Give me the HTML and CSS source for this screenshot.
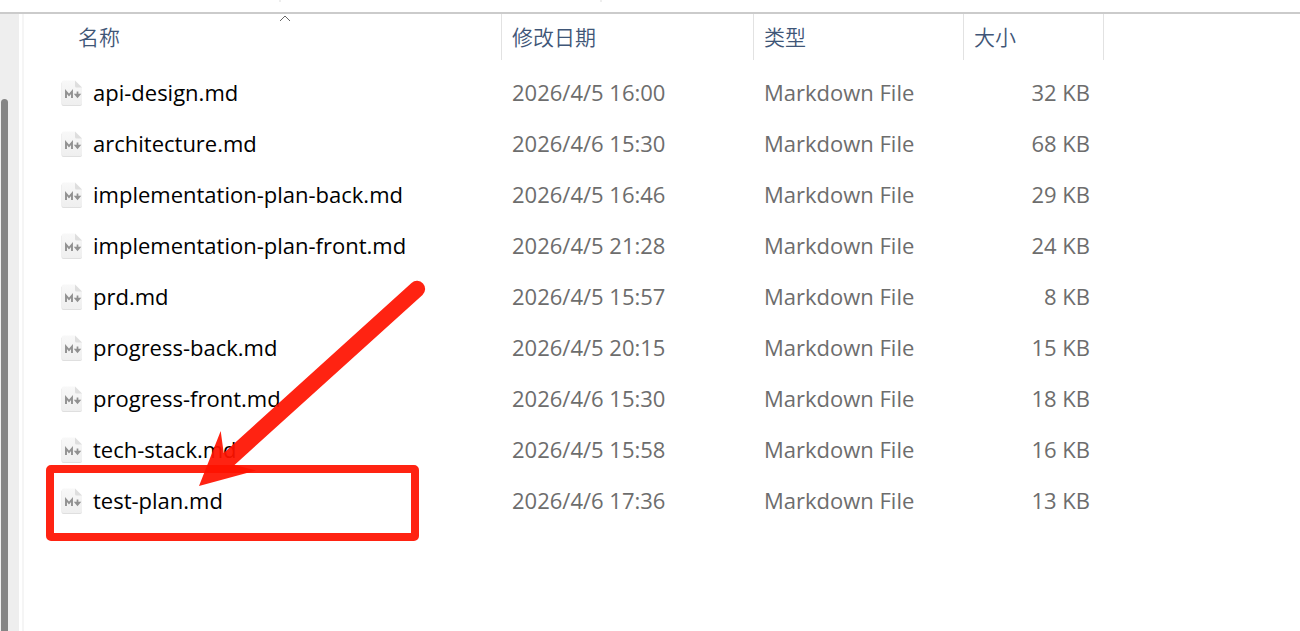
FILE: index.html
```
<!DOCTYPE html>
<html lang="zh-CN">
<head>
<meta charset="utf-8">
<title>docs</title>
<link rel="stylesheet" href="styles.css">
</head>
<body>
<svg class="defs" aria-hidden="true">
  <defs>
    <linearGradient id="paper" x1="0" y1="0" x2="0" y2="1">
      <stop offset="0" stop-color="#f8f8f8"/><stop offset="1" stop-color="#efefef"/>
    </linearGradient>
    <symbol id="md" viewBox="0 0 22 27">
      <path d="M2.500 1.500H14l7 7V24a2 2 0 0 1-2 2H2.500a2 2 0 0 1-2-2V3a2 2 0 0 1 2-1.500z" fill="#dfdfdf"/>
      <path d="M2.500.5H14l7 7V23.500a1.500 1.500 0 0 1-1.500 1.500h-17A1.500 1.500 0 0 1 1 23.500V2A1.500 1.500 0 0 1 2.500.5z" fill="url(#paper)"/>
      <path d="M14 .5l7 7h-5.500A1.500 1.500 0 0 1 14 6z" fill="#dedede"/>
      <path d="M5 18v-6.500l3 3.500 3-3.500V18" fill="none" stroke="#919191" stroke-width="1.900"/>
      <path d="M16.500 11.500v3M14.500 14.500h4l-2 2.500z" fill="#919191" stroke="#919191" stroke-width="1.700"/>
    </symbol>
  </defs>
</svg>
<div class="toolbar-edge"><span class="tick"></span><span class="tick"></span></div>
<div class="explorer">
  <aside class="nav-pane"><div class="scroll-thumb"></div></aside>
  <main class="file-pane">
    <table class="files">
      <colgroup><col class="col-name"><col class="col-date"><col class="col-type"><col class="col-size"></colgroup>
      <thead>
        <tr>
          <th class="name">名称<svg class="sort" viewBox="0 0 12 7" aria-hidden="true"><path d="M1 6l5-5 5 5"/></svg></th>
          <th>修改日期</th><th>类型</th><th>大小</th>
        </tr>
      </thead>
      <tbody>
        <tr><td class="name"><span class="file"><svg class="icon"><use href="#md"/></svg>api-design.md</span></td><td>2026/4/5 16:00</td><td>Markdown File</td><td class="size">32 KB</td></tr>
        <tr><td class="name"><span class="file"><svg class="icon"><use href="#md"/></svg>architecture.md</span></td><td>2026/4/6 15:30</td><td>Markdown File</td><td class="size">68 KB</td></tr>
        <tr><td class="name"><span class="file"><svg class="icon"><use href="#md"/></svg>implementation-plan-back.md</span></td><td>2026/4/5 16:46</td><td>Markdown File</td><td class="size">29 KB</td></tr>
        <tr><td class="name"><span class="file"><svg class="icon"><use href="#md"/></svg>implementation-plan-front.md</span></td><td>2026/4/5 21:28</td><td>Markdown File</td><td class="size">24 KB</td></tr>
        <tr><td class="name"><span class="file"><svg class="icon"><use href="#md"/></svg>prd.md</span></td><td>2026/4/5 15:57</td><td>Markdown File</td><td class="size">8 KB</td></tr>
        <tr><td class="name"><span class="file"><svg class="icon"><use href="#md"/></svg>progress-back.md</span></td><td>2026/4/5 20:15</td><td>Markdown File</td><td class="size">15 KB</td></tr>
        <tr><td class="name"><span class="file"><svg class="icon"><use href="#md"/></svg>progress-front.md</span></td><td>2026/4/6 15:30</td><td>Markdown File</td><td class="size">18 KB</td></tr>
        <tr><td class="name"><span class="file"><svg class="icon"><use href="#md"/></svg>tech-stack.md</span></td><td>2026/4/5 15:58</td><td>Markdown File</td><td class="size">16 KB</td></tr>
        <tr><td class="name"><span class="file"><svg class="icon"><use href="#md"/></svg>test-plan.md</span></td><td>2026/4/6 17:36</td><td>Markdown File</td><td class="size">13 KB</td></tr>
      </tbody>
    </table>
    <svg class="annotation" viewBox="46 280 384 262" aria-hidden="true">
      <rect x="50" y="469" width="365" height="68" rx="1" fill="none" stroke="#ff1200" stroke-width="8" stroke-linejoin="round" opacity=".93"/>
      <path d="M199 486L220.700 431L223.700 453L411.500 283A8 8 0 0 1 422.500 295L234.500 465L256 470.500z" fill="#ff1200" opacity=".93"/>
    </svg>
  </main>
</div>
</body>
</html>
```
FILE: styles.css
```
* { box-sizing: border-box; }

body {
  margin: 0;
  min-height: 100vh;
  display: flex;
  flex-direction: column;
  background: #fff;
  color: #6d6d6d;
  font: 22px/30px "Open Sans", "Noto Sans CJK SC", sans-serif;
}

.defs { position: absolute; width: 0; height: 0; }

.toolbar-edge {
  display: flex;
  gap: 319px;
  height: 14px;
  padding-left: 279px;
  border-bottom: 2px solid #cbcbcb;
}

.tick { width: 2px; height: 2px; background: #eee; }

.explorer { flex: 1; display: flex; }

.nav-pane {
  width: 19px;
  padding: 85px 0 0 1px;
  background: #eee;
  display: flex;
}

.scroll-thumb {
  width: 7px;
  background: #858585;
  border-radius: 4px 4px 0 0;
}

.file-pane {
  position: relative;
  flex: 1;
  margin-left: 3px;
  border-left: 2px solid #f5f5f5;
}

.files {
  table-layout: fixed;
  border-collapse: separate;
  border-spacing: 0;
  width: 1080px;
}

.col-name { width: 478px; }
.col-date { width: 252px; }
.col-type { width: 210px; }
.col-size { width: 140px; }

th, td { padding: 0 10px; text-align: left; white-space: nowrap; }

th {
  position: relative;
  height: 46px;
  border-right: 1px solid #e2e2e2;
  color: #3f5677;
  font-size: 21px;
  font-weight: 350;
}

th.name { padding-left: 54px; }

.sort {
  position: absolute;
  top: 1px;
  left: 255px;
  width: 12px;
  height: 7px;
  fill: none;
  stroke: #666;
}

tbody::before { content: ""; display: block; height: 8px; }

td { height: 51px; padding-bottom: 4px; }
td.name { padding-left: 37px; color: #000; }
td.size { padding-right: 14px; text-align: right; }

.file { display: flex; align-items: flex-end; gap: 10px; }
.icon { width: 22px; height: 27px; }

.annotation {
  position: absolute;
  left: 22px;
  top: 266px;
  width: 384px;
  height: 262px;
  pointer-events: none;
}
```
